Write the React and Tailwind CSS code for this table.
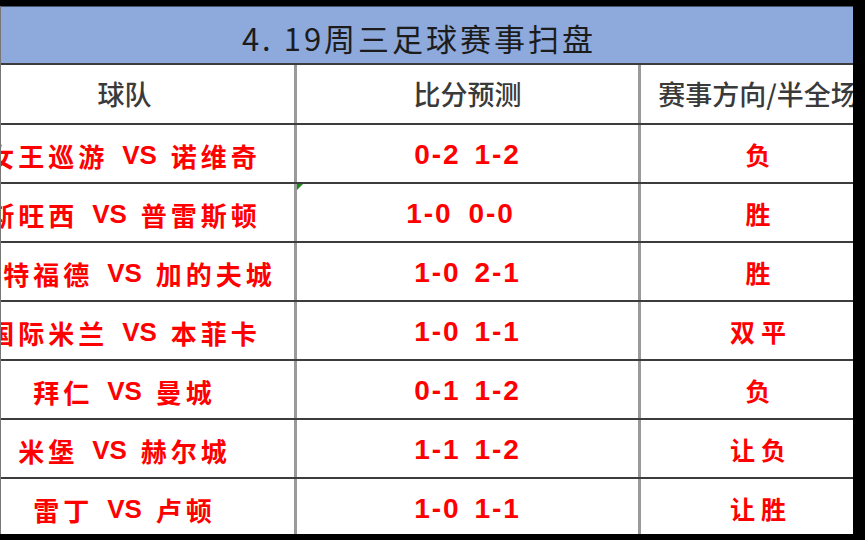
import React from "react";

const rows = [
  ["女王巡游", "诺维奇", "0-2 1-2", "负"],
  ["斯旺西", "普雷斯顿", "1-0 0-0", "胜"],
  ["布特福德", "加的夫城", "1-0 2-1", "胜"],
  ["国际米兰", "本菲卡", "1-0 1-1", "双平"],
  ["拜仁", "曼城", "0-1 1-2", "负"],
  ["米堡", "赫尔城", "1-1 1-2", "让负"],
  ["雷丁", "卢顿", "1-0 1-1", "让胜"],
];

const cjk = { fontFamily: '"Noto Sans CJK SC", "Noto Sans", sans-serif' };
const lat = { fontFamily: '"Liberation Sans", Arial, sans-serif' };

export default function App() {
  return (
    <div className="w-[865px] h-[540px] bg-black pt-[6px]">
      <div className="w-[853px] h-[528px] overflow-hidden bg-white border-l border-[#777]">
        <div className="ml-[-46px] w-[920px]">
          <div
            className="h-[57px] bg-[#8EA9DB] border-t border-[#44546a] flex items-center justify-center pt-[6px] pl-[8px] text-[31px] text-[#1c1c1c] tracking-[3px]"
            style={cjk}
          >
            4. 19周三足球赛事扫盘
          </div>
          <div className="flex h-[60px] border-t-2 border-[#3c3c3c] text-[27px] text-[#3a3a3a] font-medium" style={cjk}>
            <div className="w-[342px] flex items-center justify-center border-r-[3px] border-[#9a9a9a]">球队</div>
            <div className="w-[344px] flex items-center justify-center border-r-[3px] border-[#9a9a9a]">比分预测</div>
            <div className="w-[234px] flex items-center justify-center whitespace-nowrap">赛事方向/半全场</div>
          </div>
          {rows.map((r, i) => (
            <div key={i} className="flex h-[59px] border-t-2 border-[#3c3c3c] text-[#ff0000] font-bold">
              <div
                className="w-[342px] flex items-center justify-center border-r-[3px] border-[#9a9a9a] text-[26px] whitespace-nowrap pt-[3px]"
                style={cjk}
              >
                <span className="tracking-[4px]">{r[0]}</span>
                <span className="mx-[14px] text-[26px]" style={lat}>VS</span>
                <span className="tracking-[4px]">{r[1]}</span>
              </div>
              <div
                className={
                  i === 1
                    ? "relative w-[344px] flex items-center justify-center border-r-[3px] border-[#9a9a9a] text-[28px] tracking-[2px] [word-spacing:6px] whitespace-pre pt-[3px] pr-[14px]"
                    : "relative w-[344px] flex items-center justify-center border-r-[3px] border-[#9a9a9a] text-[28px] tracking-[2px] [word-spacing:4px] whitespace-pre pt-[3px]"
                }
                style={lat}
              >
                {i === 1 && (
                  <div className="absolute left-0 top-0 w-0 h-0 border-t-[6px] border-r-[6px] border-t-[#1a8a1a] border-r-transparent" />
                )}
                {r[2]}
              </div>
              <div className="w-[234px] flex items-center justify-center text-[25px] tracking-[6px] pl-[6px] pt-[3px]" style={cjk}>
                {r[3]}
              </div>
            </div>
          ))}
          <div className="border-t-2 border-[#9a9a9a]" />
        </div>
      </div>
    </div>
  );
}
